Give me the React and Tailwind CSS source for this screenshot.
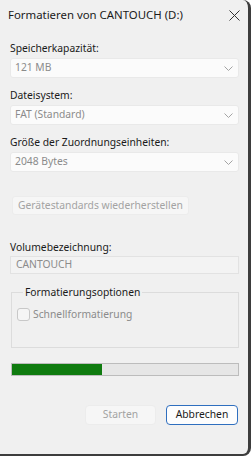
import React from 'react';

const Chevron = () => (
    <svg width="9" height="5" viewBox="0 0 9 5" fill="none" className="shrink-0">
        <path d="M0.5 0.5 L4.5 4.5 L8.5 0.5" stroke="#a3a3a3" strokeWidth="1" />
    </svg>
);

const Combo = ({ value }) => (
    <div className="h-[20px] flex items-center justify-between pl-[4px] pr-[5px] bg-[#fbfbfb] border border-[#e9e9e9] rounded-[3px] text-[#8b8b8b]">
        <span>{value}</span>
        <Chevron />
    </div>
);

const Label = ({ children, className = '' }) => (
    <div className={`h-[16px] leading-[16px] text-[#1a1a1a] ${className}`}>{children}</div>
);

export default function App() {
    return (
        <div className="w-[251px] h-[456px] bg-white">
            <div className="w-full h-full flex flex-col bg-[#f0f0f0] rounded-tr-[8px] rounded-br-[8px] border-r-[3px] border-b-2 border-[#3d3d3d] text-[10.3px] font-['Segoe_UI','Noto_Sans',sans-serif]">
                {/* title bar */}
                <div className="h-[30px] flex items-center justify-between pl-[8px] pr-[8px]">
                    <span className="text-[11.4px] text-[#1a1a1a]">Formatieren von CANTOUCH (D:)</span>
                    <svg width="11" height="11" viewBox="0 0 11 11" fill="none">
                        <path d="M0.5 0.5 L10.5 10.5 M10.5 0.5 L0.5 10.5" stroke="#333" strokeWidth="1" />
                    </svg>
                </div>

                <div className="flex flex-col pl-[10px] pr-[9px]">
                    <Label className="mt-[10px]">Speicherkapazität:</Label>
                    <div className="mt-[2px]"><Combo value="121 MB" /></div>

                    <Label className="mt-[9px]">Dateisystem:</Label>
                    <div className="mt-[2px]"><Combo value="FAT (Standard)" /></div>

                    <Label className="mt-[9px]">Größe der Zuordnungseinheiten:</Label>
                    <div className="mt-[2px]"><Combo value="2048 Bytes" /></div>

                    <div className="mt-[24px] ml-[2px] flex">
                        <button disabled className="h-[19px] px-[5px] flex items-center justify-center whitespace-nowrap bg-[#f6f6f6] border border-[#ececec] rounded-[3px] text-[#a3a3a3]">
                            Gerätestandards wiederherstellen
                        </button>
                    </div>

                    <Label className="mt-[24px]">Volumebezeichnung:</Label>
                    <div className="mt-[1px] h-[18px] flex items-center pl-[5px] bg-[#f3f3f3] border border-[#e2e2e2] text-[#8b8b8b]">
                        CANTOUCH
                    </div>

                    <fieldset className="mt-[10px] ml-[1px] h-[64px] border border-[#dcdcdc] pl-[5px]">
                        <legend className="ml-[6px] px-[2px] leading-[16px] text-[#1a1a1a]">Formatierungsoptionen</legend>
                        <div className="mt-[6px] flex items-center gap-[3px]">
                            <span className="w-[13px] h-[13px] rounded-[3px] border border-[#c8c8c8] bg-[#f5f5f5]" />
                            <span className="text-[#8b8b8b] leading-[16px]">Schnellformatierung</span>
                        </div>
                    </fieldset>

                    <div className="mt-[15px] h-[13px] ml-[1px] border border-[#bcbcbc] bg-[#e6e6e6]">
                        <div className="h-full bg-[#0f7b0f]" style={{ width: '40%' }} />
                    </div>

                    <div className="mt-[29px] flex justify-end gap-[10px] pr-[1px]">
                        <button disabled className="h-[20px] w-[71px] flex items-center justify-center bg-[#f6f6f6] border border-[#ececec] rounded-[4px] text-[#a3a3a3]">
                            Starten
                        </button>
                        <button className="h-[20px] w-[72px] flex items-center justify-center bg-[#fdfdfd] border border-[#2f6fbf] rounded-[4px] text-[#1a1a1a]">
                            Abbrechen
                        </button>
                    </div>
                </div>
            </div>
        </div>
    );
}
